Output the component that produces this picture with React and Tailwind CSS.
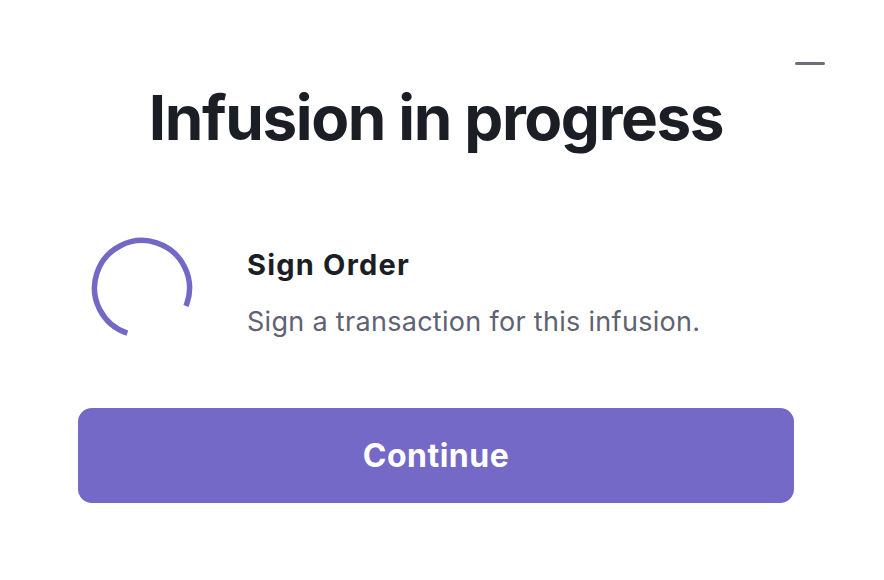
import React from "react";

function Spinner() {
  // arc with a gap on the lower right
  return (
    <svg width="106" height="106" viewBox="0 0 106 106" className="block">
      <circle
        cx="53"
        cy="54"
        r="47.5"
        fill="none"
        stroke="#7468c6"
        strokeWidth="5.5"
        strokeDasharray="227 298.5"
        transform="rotate(108 53 54)"
      />
    </svg>
  );
}

export default function App() {
  return (
    <div
      className="relative w-[884px] h-[580px] bg-white pl-[78px] pr-[90px] pt-[86px]"
      style={{ fontFamily: "Inter, 'Noto Sans', sans-serif" }}
    >
      {/* minimize */}
      <button className="absolute left-[795px] top-[62px] w-[30px] h-[3px] rounded-full bg-[#6e6e7a]" />

      <h1 className="text-center text-[62px] leading-[64px] font-bold tracking-[-1.4px] text-[#1c1e26]">
        Infusion in progress
      </h1>

      <div className="flex items-start mt-[84px]">
        <div className="w-[128px] flex justify-center">
          <Spinner />
        </div>
        <div className="ml-[41px] mt-[14px] flex flex-col">
          <div className="text-[29px] leading-[34px] font-bold tracking-[1.2px] text-[#1c1e26]">Sign Order</div>
          <div className="mt-[24px] text-[27px] leading-[32px] tracking-[0.3px] text-[#5f6270]">
            Sign a transaction for this infusion.
          </div>
        </div>
      </div>

      <button className="mt-[68px] w-full h-[95px] rounded-[14px] bg-[#7469c6] text-white text-[32px] tracking-[0.5px] font-bold">
        Continue
      </button>
    </div>
  );
}
